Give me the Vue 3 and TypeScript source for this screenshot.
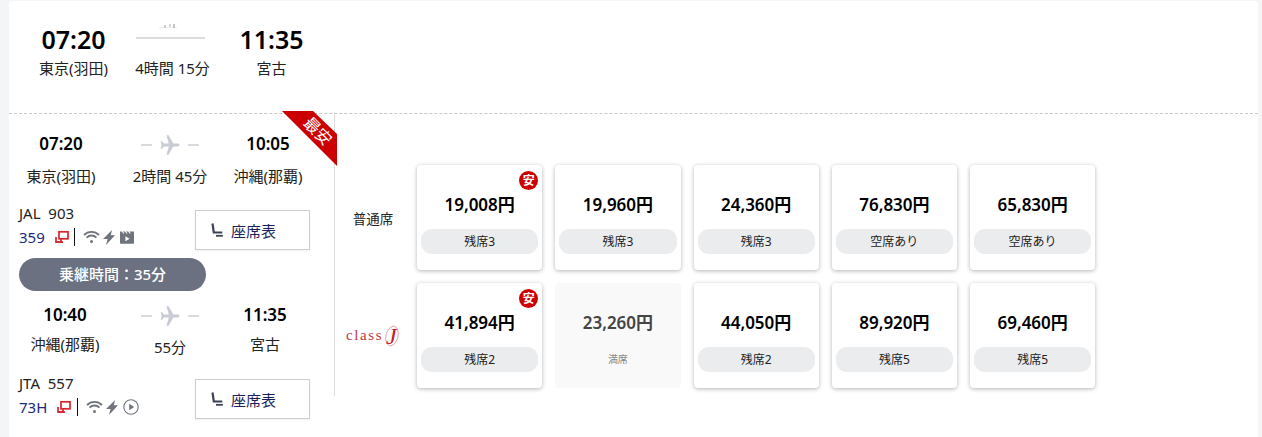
<template>
  <div class="page">
    <div class="result-card">
      <!-- 全体の行程 -->
      <div class="summary">
        <div class="summary-col">
          <div class="summary-time">07:20</div>
          <div class="summary-place">東京(羽田)</div>
        </div>
        <div class="summary-col">
          <svg class="mini-mark" width="20" height="6" viewBox="0 0 20 6">
            <rect x="0" y="4" width="18" height="1" fill="#eeeeee" />
            <rect x="5" y="2" width="2" height="3" fill="#cccccc" />
            <rect x="10" y="1" width="2" height="3" fill="#d8d8d8" />
            <rect x="14" y="1" width="2" height="4" fill="#c4c4c4" />
          </svg>
          <div class="summary-line"></div>
          <div class="summary-place">4時間 15分</div>
        </div>
        <div class="summary-col">
          <div class="summary-time">11:35</div>
          <div class="summary-place">宮古</div>
        </div>
      </div>

      <div class="detail">
        <div class="ribbon"><span class="ribbon-text">最安</span></div>

        <!-- 区間 -->
        <div class="legs">
          <template v-for="(leg, i) in legs" :key="leg.flight">
            <div :class="['leg-row', `leg-row-${i}`]">
              <div class="leg-col">
                <div class="leg-time">{{ leg.depTime }}</div>
                <div class="leg-place">{{ leg.dep }}</div>
              </div>
              <div class="leg-col">
                <div class="leg-plane">
                  <span class="dash"></span>
                  <svg width="20" height="20" viewBox="0 0 20 20">
                    <path
                      fill="#c9ccd4"
                      d="M19.6 10c0-.9-1-1.4-2-1.4h-4.3L8.6.2H6.5l2.3 8.4H3.9L2.2 6.3H.6L1.7 10 .6 13.7h1.6l1.7-2.3h4.9L6.5 19.8h2.1l4.7-8.4h4.3c1 0 2-.5 2-1.4z"
                    />
                  </svg>
                  <span class="dash"></span>
                </div>
                <div class="leg-place leg-duration">{{ leg.duration }}</div>
              </div>
              <div class="leg-col">
                <div class="leg-time">{{ leg.arrTime }}</div>
                <div class="leg-place">{{ leg.arr }}</div>
              </div>
            </div>

            <div :class="['flight-row', `flight-row-${i}`]">
              <div class="flight-info">
                <div class="flight-no">{{ leg.flight }}</div>
                <div class="flight-meta">
                  <span class="aircraft">{{ leg.aircraft }}</span>
                  <svg class="seat-map-link" width="14" height="14" viewBox="0 0 14 14" fill="none" stroke="#d8262c" stroke-width="1.7">
                    <rect x="4" y="1.8" width="9" height="7" />
                    <path d="M1 7v5.2h7" />
                    <path d="M1 12.2h5V9" />
                  </svg>
                  <span class="divider"></span>
                  <svg class="svc" width="17" height="14" viewBox="0 0 17 14" fill="none" stroke="#70747c" stroke-width="1.8">
                    <path d="M1 5a10.5 10.5 0 0 1 15 0" />
                    <path d="M3.6 7.6a6.8 6.8 0 0 1 9.8 0" />
                    <circle cx="8.5" cy="11.4" r="1.5" fill="#70747c" stroke="none" />
                  </svg>
                  <svg class="svc svc-bolt" width="12" height="15" viewBox="0 0 12 15">
                    <path fill="#70747c" d="M9 0 0 9h4.6L3 15l9-9.8H7.8z" />
                  </svg>
                  <svg v-if="i === 0" class="svc" width="14" height="14" viewBox="0 0 14 14">
                    <path
                      fill="#70747c"
                      fill-rule="evenodd"
                      d="M0 1.5h1.8l1.4 2h1.2l-1.4-2h2l1.4 2h1.2l-1.4-2h2l1.4 2h1.2l-1.4-2H14V13a.8.8 0 0 1-.8.8H.8A.8.8 0 0 1 0 13zM5.4 6.2v5l4.2-2.5z"
                    />
                  </svg>
                  <svg v-else class="svc" width="16" height="16" viewBox="0 0 16 16" fill="none" stroke="#70747c" stroke-width="1.1">
                    <circle cx="8" cy="8" r="7.2" />
                    <path fill="#70747c" stroke="none" d="M6.2 4.8v6.4L11.2 8z" />
                  </svg>
                </div>
              </div>
              <button class="seat-btn" type="button">
                <svg width="12" height="14" viewBox="0 0 12 14" fill="none" stroke="#3b4254" stroke-width="2.2">
                  <path d="M1.5 .5 2.8 9.5h8.5" />
                  <path d="M5 12.8h6.8" stroke-width="1.8" />
                </svg>
                <span>座席表</span>
              </button>
            </div>

            <div v-if="i === 0" class="transfer">乗継時間：35分</div>
          </template>
        </div>

        <!-- 運賃 -->
        <div class="fares">
          <div class="fare-labels">
            <div class="fare-label">普通席</div>
            <div class="fare-label">
              <span class="class-j">
                <span>class</span>
                <span class="class-j-mark">
                  <svg width="16" height="22" viewBox="0 0 16 22" fill="none" stroke="#d9868a" stroke-width=".7">
                    <ellipse cx="8" cy="11" rx="6" ry="10" transform="rotate(14 8 11)" />
                  </svg>
                  <i>J</i>
                </span>
              </span>
            </div>
          </div>
          <div class="fare-grid">
            <div
              v-for="fare in fares"
              :key="fare.price"
              :class="['fare-card', { 'fare-full': fare.full }]"
            >
              <span v-if="fare.cheapest" class="cheap-badge">安</span>
              <div class="fare-price">{{ fare.price }}円</div>
              <div class="fare-seats">{{ fare.seats }}</div>
            </div>
          </div>
        </div>
      </div>
    </div>
  </div>
</template>

<script setup lang="ts">
interface Leg {
  depTime: string
  dep: string
  arrTime: string
  arr: string
  duration: string
  flight: string
  aircraft: string
}

interface Fare {
  price: string
  seats: string
  cheapest?: boolean
  full?: boolean
}

const legs: Leg[] = [
  {
    depTime: '07:20',
    dep: '東京(羽田)',
    arrTime: '10:05',
    arr: '沖縄(那覇)',
    duration: '2時間 45分',
    flight: 'JAL\u00a0\u00a0903',
    aircraft: '359'
  },
  {
    depTime: '10:40',
    dep: '沖縄(那覇)',
    arrTime: '11:35',
    arr: '宮古',
    duration: '55分',
    flight: 'JTA\u00a0\u00a0557',
    aircraft: '73H'
  }
]

const fares: Fare[] = [
  { price: '19,008', seats: '残席3', cheapest: true },
  { price: '19,960', seats: '残席3' },
  { price: '24,360', seats: '残席3' },
  { price: '76,830', seats: '空席あり' },
  { price: '65,830', seats: '空席あり' },
  { price: '41,894', seats: '残席2', cheapest: true },
  { price: '23,260', seats: '満席', full: true },
  { price: '44,050', seats: '残席2' },
  { price: '89,920', seats: '残席5' },
  { price: '69,460', seats: '残席5' }
]
</script>

<style>
html,
body {
  margin: 0;
  background: #f4f5f7;
  overflow: hidden;
}
</style>

<style scoped>
.page {
  height: 437px;
  padding: 1px 4px 0 9px;
  box-sizing: border-box;
  font-family: "Noto Sans", "Noto Sans CJK JP", sans-serif;
  color: #111;
}

.result-card {
  height: 436px;
  background: #fff;
  border-radius: 4px 4px 0 0;
}

.summary {
  display: flex;
  height: 112px;
  padding-left: 15px;
  border-bottom: 1px dashed #c8c8c8;
  box-sizing: content-box;
}

.summary-col {
  position: relative;
  width: 99px;
  text-align: center;
  padding-top: 20px;
}

.summary-time {
  font-size: 25px;
  line-height: 36px;
  font-weight: 600;
  color: #000;
}

.summary-place {
  font-size: 15px;
  line-height: 22px;
  color: #222;
}

.mini-mark {
  display: block;
  margin: 2px auto 0;
  transform: translateX(-4px);
}

.summary-line {
  width: 69px;
  height: 2px;
  margin: 8px auto 18px;
  background: #dddddd;
  transform: translateX(-2px);
}

.detail {
  position: relative;
  display: flex;
  align-items: flex-start;
}

.ribbon {
  position: absolute;
  top: -3px;
  left: 273px;
  width: 55px;
  height: 55px;
  background: #cc0000;
  clip-path: polygon(0 0, 31px 0, 55px 23px, 55px 55px);
}

.ribbon-text {
  position: absolute;
  top: 10px;
  left: 18px;
  width: 36px;
  text-align: center;
  color: #fff;
  font-size: 16px;
  line-height: 20px;
  transform: rotate(45deg);
}

.legs {
  width: 326px;
  height: 282px;
  padding-top: 18px;
  box-sizing: border-box;
  border-right: 1px solid #dddddd;
}

.leg-row {
  display: grid;
  grid-template-columns: 104px 114px 82px;
  text-align: center;
}

.leg-row-1 {
  grid-template-columns: 96px 114px 76px;
  margin-top: 12px;
  padding-left: 8px;
}

.leg-time {
  font-size: 17px;
  line-height: 24px;
  font-weight: 600;
  color: #000;
}

.leg-place {
  margin-top: 10px;
  font-size: 15px;
  line-height: 20px;
  color: #222;
}

.leg-row-1 .leg-place {
  margin-top: 7px;
}

.leg-plane {
  display: flex;
  align-items: center;
  justify-content: center;
  gap: 8px;
  height: 24px;
  margin-top: 1px;
}

.leg-row .leg-duration {
  margin-top: 9px;
}

.dash {
  width: 11px;
  height: 2px;
  background: #d8dade;
}

.flight-row {
  display: flex;
  margin-top: 17px;
  padding-left: 10px;
}

.flight-row-1 {
  margin-top: 16px;
}

.flight-info {
  width: 176px;
}

.flight-no {
  font-size: 15px;
  line-height: 20px;
  color: #222;
}

.flight-meta {
  display: flex;
  align-items: center;
  height: 24px;
  margin-top: 2px;
}

.aircraft {
  width: 36px;
  font-size: 15px;
  color: #1a2a78;
}

.flight-row-1 .aircraft {
  width: 38px;
}

.seat-map-link {
  flex: none;
}

.divider {
  width: 1px;
  height: 18px;
  margin: 0 8px 0 5px;
  background: #111;
}

.flight-row-1 .divider {
  margin-left: 6px;
}

.svc {
  flex: none;
  margin-right: 3px;
}

.svc-bolt {
  margin-right: 5px;
}

.seat-btn {
  display: flex;
  align-items: center;
  gap: 8px;
  width: 115px;
  height: 40px;
  margin-top: 7px;
  padding: 0 0 0 15px;
  box-sizing: border-box;
  background: #fff;
  border: 1px solid #cdced2;
  box-shadow: 0 1px 2px rgba(0, 0, 0, 0.06);
  font-family: inherit;
  font-size: 15px;
  color: #1c1f5c;
}

.flight-row-1 .seat-btn {
  margin-top: 6px;
}

.transfer {
  width: 187px;
  height: 33px;
  margin: 8px 0 0 10px;
  border-radius: 17px;
  background: #6b7180;
  color: #fff;
  font-size: 15px;
  font-weight: 500;
  line-height: 33px;
  text-align: center;
}

.fares {
  display: flex;
  padding-top: 51px;
}

.fare-labels {
  display: grid;
  grid-template-rows: 105px 105px;
  row-gap: 13px;
  width: 82px;
}

.fare-label {
  display: flex;
  align-items: center;
  justify-content: center;
  padding-right: 6px;
  font-size: 13.5px;
  color: #222;
}

.class-j {
  display: flex;
  align-items: center;
  font-family: "Liberation Serif", serif;
  font-size: 15px;
  letter-spacing: 1.6px;
  color: #c4343c;
}

.class-j-mark {
  position: relative;
  display: flex;
  width: 16px;
  height: 22px;
  margin-left: 1px;
}

.class-j-mark i {
  position: absolute;
  top: -1px;
  left: 2px;
  font-size: 24px;
  line-height: 24px;
  letter-spacing: 0;
  color: #c4202a;
}

.fare-grid {
  display: grid;
  grid-template-columns: repeat(5, 125.25px);
  grid-auto-rows: 105px;
  gap: 13px;
}

.fare-card {
  position: relative;
  display: flex;
  flex-direction: column;
  align-items: center;
  padding: 27px 4px 0;
  box-sizing: border-box;
  background: #fff;
  border-radius: 4px;
  box-shadow: 0 1px 4px rgba(0, 0, 0, 0.3);
}

.fare-price {
  font-size: 17px;
  line-height: 26px;
  font-weight: 600;
  color: #000;
}

.fare-seats {
  align-self: stretch;
  height: 25px;
  margin-top: 11px;
  border-radius: 11px;
  background: #ebecee;
  font-size: 12px;
  line-height: 25px;
  text-align: center;
  color: #222;
}

.fare-full {
  background: #f9f9f9;
  box-shadow: none;
}

.fare-full .fare-price {
  color: #444;
}

.fare-full .fare-seats {
  background: transparent;
  font-size: 10px;
  color: #888;
}

.cheap-badge {
  position: absolute;
  top: 6px;
  right: 4px;
  width: 19px;
  height: 19px;
  border-radius: 50%;
  background: #cc0000;
  color: #fff;
  font-size: 12px;
  font-weight: 700;
  line-height: 19px;
  text-align: center;
}
</style>
